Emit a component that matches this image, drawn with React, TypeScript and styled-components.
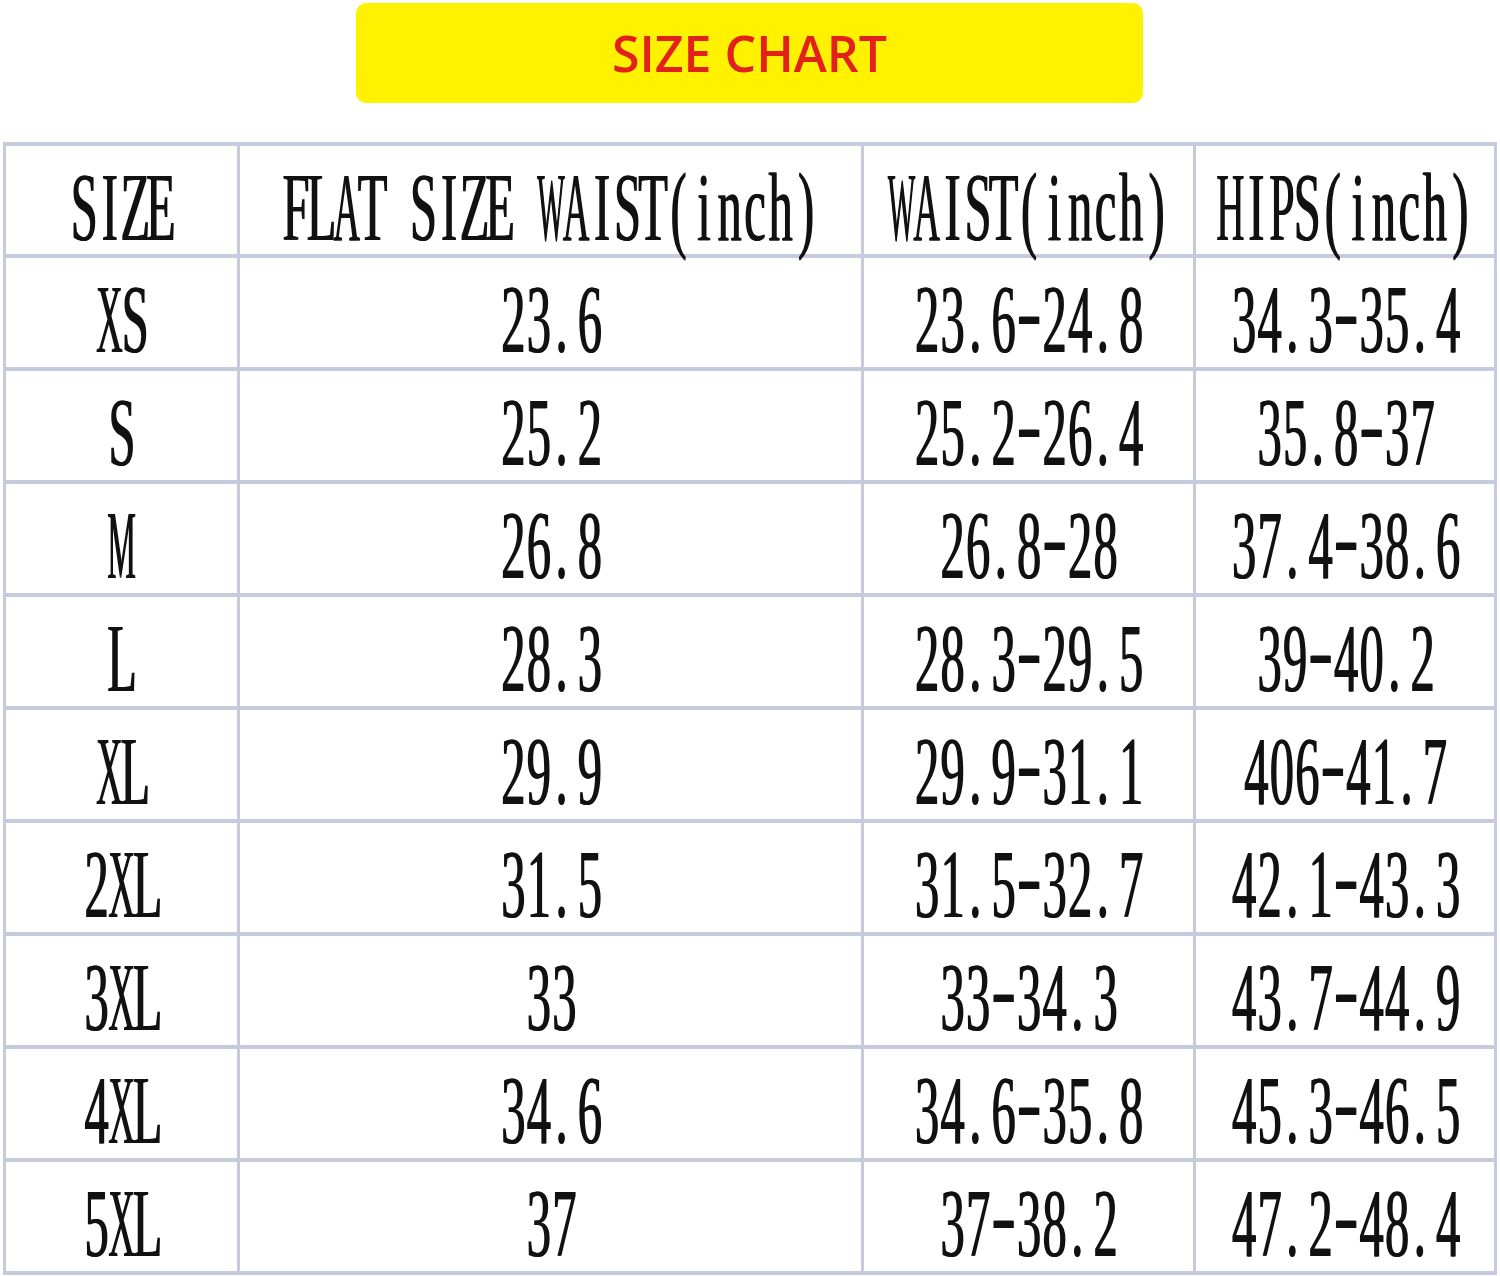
import React from "react";
import styled, { createGlobalStyle } from "styled-components";

const GlobalStyle = createGlobalStyle`
  html, body {
    margin: 0;
    padding: 0;
    background: #ffffff;
    overflow: hidden;
  }
`;

type RowType = {
  size: string;
  flat: string;
  waist: string;
  hips: string;
};

const rows: RowType[] = [
  { size: "XS", flat: "23.6", waist: "23.6-24.8", hips: "34.3-35.4" },
  { size: "S", flat: "25.2", waist: "25.2-26.4", hips: "35.8-37" },
  { size: "M", flat: "26.8", waist: "26.8-28", hips: "37.4-38.6" },
  { size: "L", flat: "28.3", waist: "28.3-29.5", hips: "39-40.2" },
  { size: "XL", flat: "29.9", waist: "29.9-31.1", hips: "406-41.7" },
  { size: "2XL", flat: "31.5", waist: "31.5-32.7", hips: "42.1-43.3" },
  { size: "3XL", flat: "33", waist: "33-34.3", hips: "43.7-44.9" },
  { size: "4XL", flat: "34.6", waist: "34.6-35.8", hips: "45.3-46.5" },
  { size: "5XL", flat: "37", waist: "37-38.2", hips: "47.2-48.4" },
];

const headers = ["SIZE", "FLAT SIZE WAIST(inch)", "WAIST(inch)", "HIPS(inch)"];

// the chart font is fixed-pitch; serif letters are fitted into equal slots
type Fit = { scale?: number; left?: boolean; lift?: number };

const fits: Record<string, Fit> = {
  W: { scale: 0.6 },
  M: { scale: 0.66 },
  A: { scale: 0.76 },
  H: { scale: 0.8 },
  X: { scale: 0.76 },
  C: { scale: 0.84 },
  P: { scale: 0.95 },
  ".": { left: true },
  "-": { scale: 1.5, lift: 9 },
};

const MonoText = ({ text }: { text: string }) => (
  <CellText>
    {text.split("").map((ch, i) => {
      const fit = fits[ch] ?? {};
      return (
        <Slot key={i} $left={fit.left}>
          <Glyph $scale={fit.scale ?? 1} $lift={fit.lift ?? 0}>
            {ch === " " ? "\u00a0" : ch}
          </Glyph>
        </Slot>
      );
    })}
  </CellText>
);

export default function App() {
  return (
    <Page>
      <GlobalStyle />
      <Banner>
        <BannerTitle>SIZE CHART</BannerTitle>
      </Banner>
      <ChartGrid>
        {headers.map((h) => (
          <Cell key={h} $header>
            <MonoText text={h} />
          </Cell>
        ))}
        {rows.map((r) => (
          <React.Fragment key={r.size}>
            <Cell>
              <MonoText text={r.size} />
            </Cell>
            <Cell>
              <MonoText text={r.flat} />
            </Cell>
            <Cell>
              <MonoText text={r.waist} />
            </Cell>
            <Cell>
              <MonoText text={r.hips} />
            </Cell>
          </React.Fragment>
        ))}
      </ChartGrid>
    </Page>
  );
}

const Page = styled.div`
  width: 1500px;
  height: 1276px;
  display: flex;
  flex-direction: column;
  align-items: flex-start;
  padding-top: 3px;
  box-sizing: border-box;
`;

const Banner = styled.div`
  align-self: center;
  width: 787px;
  height: 100px;
  margin-left: -1px;
  border-radius: 10px;
  background: #fff200;
  display: flex;
  align-items: center;
  justify-content: center;
`;

const BannerTitle = styled.h1`
  margin: 0;
  font-family: "Open Sans", "Noto Sans", sans-serif;
  font-size: 50px;
  font-weight: 600;
  line-height: 1;
  color: #e3211b;
`;

const ChartGrid = styled.div`
  margin: 39px 0 0 3px;
  display: grid;
  grid-template-columns: 231px 621px 329px 298px;
  grid-template-rows: 108px repeat(9, 109px);
  column-gap: 3px;
  row-gap: 4px;
  padding: 4px 3px;
  background: #c6cadd;
`;

const Cell = styled.div<{ $header?: boolean }>`
  min-width: 0;
  background: #ffffff;
  display: flex;
  align-items: center;
  justify-content: center;
  padding-top: ${(p) => (p.$header ? "16px" : "14px")};
  box-sizing: border-box;
`;

const CellText = styled.span`
  display: inline-flex;
  flex-shrink: 0;
  font-family: "Liberation Serif", "Times New Roman", serif;
  font-size: 97px;
  line-height: 0.8;
  color: #111111;
  text-shadow: 2px 0 0 #111111;
  transform: scaleX(0.5);
  transform-origin: center;
`;

const Slot = styled.span<{ $left?: boolean }>`
  display: inline-flex;
  justify-content: ${(p) => (p.$left ? "flex-start" : "center")};
  padding-left: ${(p) => (p.$left ? "8px" : "0")};
  box-sizing: border-box;
  width: 51px;
`;

const Glyph = styled.span<{ $scale: number; $lift: number }>`
  display: inline-block;
  white-space: pre;
  transform: translateY(-${(p) => p.$lift}px) scaleX(${(p) => p.$scale});
`;
